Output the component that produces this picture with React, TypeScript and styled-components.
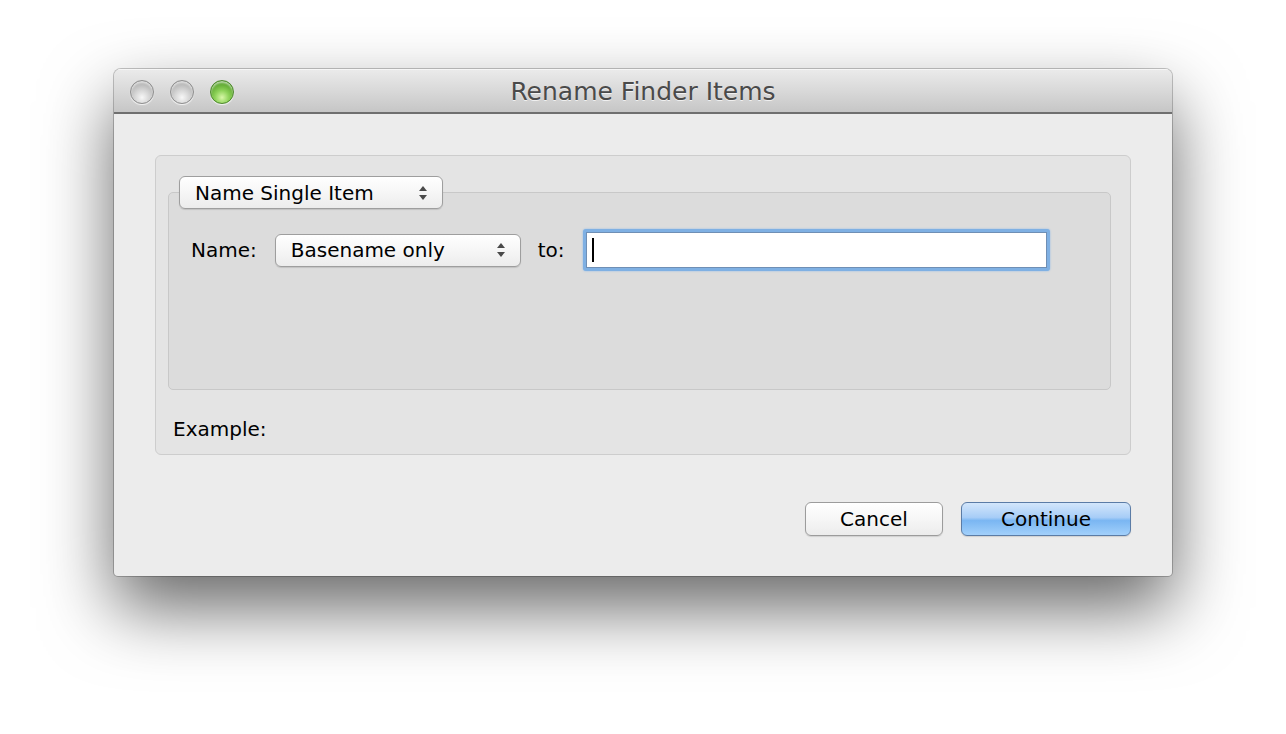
import styled, { createGlobalStyle } from "styled-components";

const GlobalStyle = createGlobalStyle`
  html, body {
    margin: 0;
    padding: 0;
    background: #ffffff;
  }
  body {
    font-family: "DejaVu Sans", "Liberation Sans", sans-serif;
    color: #000;
  }
`;

const Page = styled.div`
  width: 1286px;
  height: 734px;
  overflow: hidden;
  padding: 69px 0 0 114px;
  box-sizing: border-box;
`;

const Window = styled.div`
  width: 1058px;
  height: 507px;
  border-radius: 7px 7px 4px 4px;
  background: #ececec;
  box-shadow: 0 32px 70px rgba(0, 0, 0, 0.6), 0 0 0 1px rgba(0, 0, 0, 0.22);
  display: flex;
  flex-direction: column;
  overflow: hidden;
`;

const TitleBar = styled.div`
  height: 45px;
  flex: none;
  position: relative;
  display: flex;
  align-items: center;
  padding: 2px 0 0 16px;
  box-sizing: border-box;
  gap: 16px;
  background: linear-gradient(#ebebeb, #d9d9d9 50%, #c6c6c6);
  border-bottom: 2px solid #6f6f6f;
  box-shadow: inset 0 1px 0 #f6f6f6;
`;

const Light = styled.span<{ $green?: boolean }>`
  width: 24px;
  height: 24px;
  border-radius: 50%;
  box-sizing: border-box;
  border: 1px solid ${(p) => (p.$green ? "#4f8a2e" : "#8f8f8f")};
  background: ${(p) =>
    p.$green
      ? "radial-gradient(circle at 50% 75%, #d8f7a8 0, #8fd35a 35%, #4e9a22 80%)"
      : "radial-gradient(circle at 50% 75%, #f7f7f7 0, #d3d3d3 40%, #a8a8a8 85%)"};
  box-shadow: 0 1px 1px rgba(255, 255, 255, 0.8), inset 0 2px 2px rgba(255, 255, 255, 0.6);
`;

const Title = styled.div`
  position: absolute;
  left: 0;
  right: 0;
  top: 2px;
  bottom: 0;
  display: flex;
  align-items: center;
  justify-content: center;
  font-size: 25px;
  color: #4a4a4a;
  text-shadow: 0 1px 0 rgba(255, 255, 255, 0.7);
  pointer-events: none;
`;

const Content = styled.div`
  flex: 1;
  padding: 41px 41px 0 41px;
  display: flex;
  flex-direction: column;
`;

const GroupBox = styled.div`
  height: 300px;
  box-sizing: border-box;
  border: 1px solid #cdcdcd;
  border-radius: 6px;
  background: #e4e4e4;
  padding: 20px 19px 0 12px;
  display: flex;
  flex-direction: column;
`;

const PopupButton = styled.div<{ $width: number }>`
  position: relative;
  z-index: 1;
  width: ${(p) => p.$width}px;
  height: 33px;
  box-sizing: border-box;
  border: 1px solid #9e9e9e;
  border-radius: 6px;
  background: linear-gradient(#ffffff, #f6f6f6 50%, #ececec);
  box-shadow: 0 1px 1px rgba(0, 0, 0, 0.12);
  display: flex;
  align-items: center;
  padding: 0 14px 0 15px;
  font-size: 20px;
  flex: none;
`;

const PopupLabel = styled.span`
  flex: 1;
  white-space: nowrap;
`;

const TabPopup = styled(PopupButton)`
  margin-left: 11px;
`;

const InnerBox = styled.div`
  margin-top: -17px;
  height: 198px;
  box-sizing: border-box;
  border: 1px solid #c8c8c8;
  border-radius: 5px;
  background: #dcdcdc;
  padding: 36px 0 0 22px;
`;

const Row = styled.div`
  display: flex;
  align-items: center;
  height: 42px;
`;

const Label = styled.span`
  font-size: 20px;
  white-space: nowrap;
`;

const NameLabel = styled(Label)`
  margin-right: 18px;
`;

const ToLabel = styled(Label)`
  margin: 0 18px 0 17px;
`;

const TextField = styled.div`
  width: 467px;
  height: 42px;
  box-sizing: border-box;
  border-radius: 3px;
  padding: 3px;
  background: #7fb0e3;
  box-shadow: 0 0 2px #8ab8ea;
`;

const FieldInner = styled.div`
  height: 100%;
  background: #ffffff;
  border: 1px solid #6f8fb5;
  box-sizing: border-box;
  display: flex;
  align-items: center;
  padding-left: 5px;
`;

const Caret = styled.span`
  width: 2px;
  height: 24px;
  background: #000;
`;

const ExampleLabel = styled(Label)`
  margin: 27px 0 0 5px;
`;

const ButtonRow = styled.div`
  display: flex;
  justify-content: flex-end;
  gap: 18px;
  margin-top: 47px;
`;

const PushButton = styled.div<{ $primary?: boolean; $width: number }>`
  width: ${(p) => p.$width}px;
  height: 34px;
  box-sizing: border-box;
  border-radius: 6px;
  border: 1px solid ${(p) => (p.$primary ? "#5b7ca6" : "#9c9c9c")};
  background: ${(p) =>
    p.$primary
      ? "linear-gradient(#d3e6fb, #a7cdf7 45%, #7ab6f2 55%, #a2d0fb)"
      : "linear-gradient(#ffffff, #f6f6f6 50%, #ececec)"};
  box-shadow: 0 1px 1px rgba(0, 0, 0, 0.12);
  display: flex;
  align-items: center;
  justify-content: center;
  font-size: 20px;
`;

const Arrows = () => (
  <svg width="10" height="16" viewBox="0 0 10 16">
    <path d="M5 1 L9 6 L1 6 Z" fill="#4a4a4a" />
    <path d="M5 15 L9 10 L1 10 Z" fill="#4a4a4a" />
  </svg>
);

const App = () => {
  return (
    <Page>
      <GlobalStyle />
      <Window>
        <TitleBar>
          <Light />
          <Light />
          <Light $green />
          <Title>Rename Finder Items</Title>
        </TitleBar>
        <Content>
          <GroupBox>
            <TabPopup $width={264}>
              <PopupLabel>Name Single Item</PopupLabel>
              <Arrows />
            </TabPopup>
            <InnerBox>
              <Row>
                <NameLabel>Name:</NameLabel>
                <PopupButton $width={246}>
                  <PopupLabel>Basename only</PopupLabel>
                  <Arrows />
                </PopupButton>
                <ToLabel>to:</ToLabel>
                <TextField>
                  <FieldInner>
                    <Caret />
                  </FieldInner>
                </TextField>
              </Row>
            </InnerBox>
            <ExampleLabel>Example:</ExampleLabel>
          </GroupBox>
          <ButtonRow>
            <PushButton $width={138}>Cancel</PushButton>
            <PushButton $width={170} $primary>
              Continue
            </PushButton>
          </ButtonRow>
        </Content>
      </Window>
    </Page>
  );
};

export default App;
